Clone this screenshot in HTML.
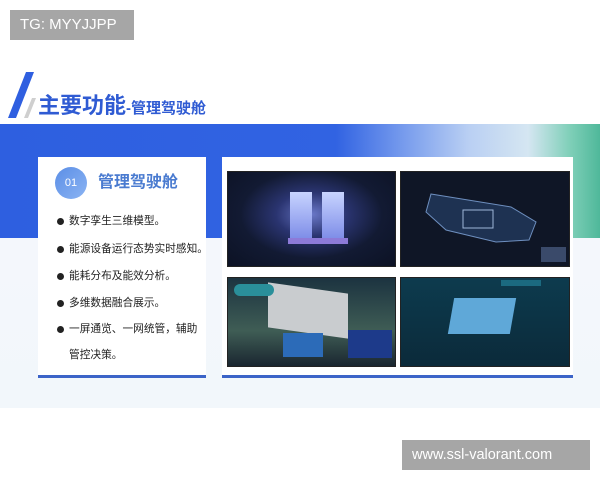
<!DOCTYPE html>
<html><head><meta charset="utf-8"><style>
*{margin:0;padding:0;box-sizing:border-box}
body{width:600px;height:480px;position:relative;background:#fff;overflow:hidden;font-family:"Liberation Sans","Noto Sans CJK SC",sans-serif}
.abs{position:absolute}
.tag{background:#a6a6a6;color:#fff;font-size:15px;line-height:30px;padding-left:10px}
.band{left:0;top:124px;width:600px;height:114px;background:linear-gradient(90deg,#2e5fe0 0%,#3163e2 56%,#6f95ec 66%,#b9cff3 78%,#d5e6f2 88%,#7fcfb8 95%,#4fb89a 100%)}
.light{left:0;top:238px;width:600px;height:170px;background:linear-gradient(180deg,#f4f7fc,#f2f7fb)}
.panel{background:#fff}
.li{position:absolute;left:69px;font-size:10.7px;color:#222;white-space:nowrap;line-height:16px}
.li:before{content:"";position:absolute;left:-12px;top:5px;width:7px;height:7px;border-radius:50%;background:#222}
.scr{position:absolute;border:1px solid #222;overflow:hidden}
</style></head><body>
<div class="abs tag" style="left:10px;top:10px;width:124px;height:30px">TG: MYYJJPP</div>
<div class="abs band"></div>
<div class="abs light"></div>
<svg class="abs" style="left:6px;top:70px" width="40" height="52"><polygon points="20,2 28,2 10,48 2,48" fill="#2f5fe0"/><polygon points="26,28 30,28 22,48 18,48" fill="#cfcfcf"/></svg>
<div class="abs" style="left:38px;top:93px;color:#2f5bd3;font-weight:bold;font-size:22px;line-height:26px;white-space:nowrap">主要功能<span style="font-size:15px">-管理驾驶舱</span></div>
<div class="abs panel" style="left:38px;top:157px;width:168px;height:218px"></div>
<div class="abs" style="left:38px;top:375px;width:168px;height:3px;background:#3c64c8"></div>
<div class="abs" style="left:55px;top:167px;width:32px;height:32px;border-radius:50%;background:linear-gradient(135deg,#5b8ee6,#8bb4f3);color:#fff;font-size:11px;line-height:32px;text-align:center">01</div>
<div class="abs" style="left:98px;top:172px;color:#4a7bd0;font-size:16px;font-weight:bold;line-height:22px">管理驾驶舱</div>
<div class="li" style="top:213px">数字孪生三维模型。</div>
<div class="li" style="top:241px">能源设备运行态势实时感知。</div>
<div class="li" style="top:268px">能耗分布及能效分析。</div>
<div class="li" style="top:295px">多维数据融合展示。</div>
<div class="li" style="top:321px">一屏通览、一网统管，辅助</div>
<div class="abs" style="left:69px;top:347px;font-size:10.7px;line-height:16px;color:#222">管控决策。</div>
<div class="abs panel" style="left:222px;top:157px;width:351px;height:218px"></div>
<div class="abs" style="left:222px;top:375px;width:351px;height:3px;background:#3c64c8"></div>
<div class="scr" style="left:227px;top:171px;width:169px;height:96px;background:radial-gradient(ellipse at 50% 45%,#6a78c8 0%,#2a3470 30%,#121a33 60%,#0c1224 100%)">
<div class="abs" style="left:62px;top:20px;width:22px;height:46px;background:linear-gradient(#c8d4ff,#7f8ee8)"></div>
<div class="abs" style="left:94px;top:20px;width:22px;height:46px;background:linear-gradient(#c8d4ff,#7f8ee8)"></div>
<div class="abs" style="left:60px;top:66px;width:60px;height:6px;background:#8d7ad8"></div></div>
<div class="scr" style="left:400px;top:171px;width:170px;height:96px;background:#0f1626">
<svg width="170" height="96"><polygon points="30,22 110,35 135,50 128,68 95,70 45,58 25,40" fill="#1e3252" stroke="#6e8fbf" stroke-width="1"/><rect x="62" y="38" width="30" height="18" fill="none" stroke="#9fb6d8"/><rect x="140" y="75" width="25" height="15" fill="#3a4a6a"/></svg></div>
<div class="scr" style="left:227px;top:277px;width:169px;height:90px;background:linear-gradient(180deg,#1c3340 0%,#3f5d55 60%,#1a2630 100%)">
<div class="abs" style="left:40px;top:10px;width:80px;height:45px;background:#c9cccf;transform:skewY(8deg)"></div>
<div class="abs" style="left:55px;top:55px;width:40px;height:24px;background:#2c6bb8"></div>
<div class="abs" style="left:120px;top:52px;width:44px;height:28px;background:#1d3a8a"></div>
<div class="abs" style="left:6px;top:6px;width:40px;height:12px;border-radius:6px;background:#2a8f9a"></div></div>
<div class="scr" style="left:400px;top:277px;width:170px;height:90px;background:linear-gradient(180deg,#0d3b4e,#0b2a3a)">
<div class="abs" style="left:50px;top:20px;width:62px;height:36px;background:#5fa8d8;transform:skewX(-10deg)"></div>
<div class="abs" style="left:100px;top:2px;width:40px;height:6px;background:#1b6a80"></div></div>
<div class="abs tag" style="left:402px;top:440px;width:188px;height:30px;font-size:14.5px">www.ssl-valorant.com</div>
</body></html>
